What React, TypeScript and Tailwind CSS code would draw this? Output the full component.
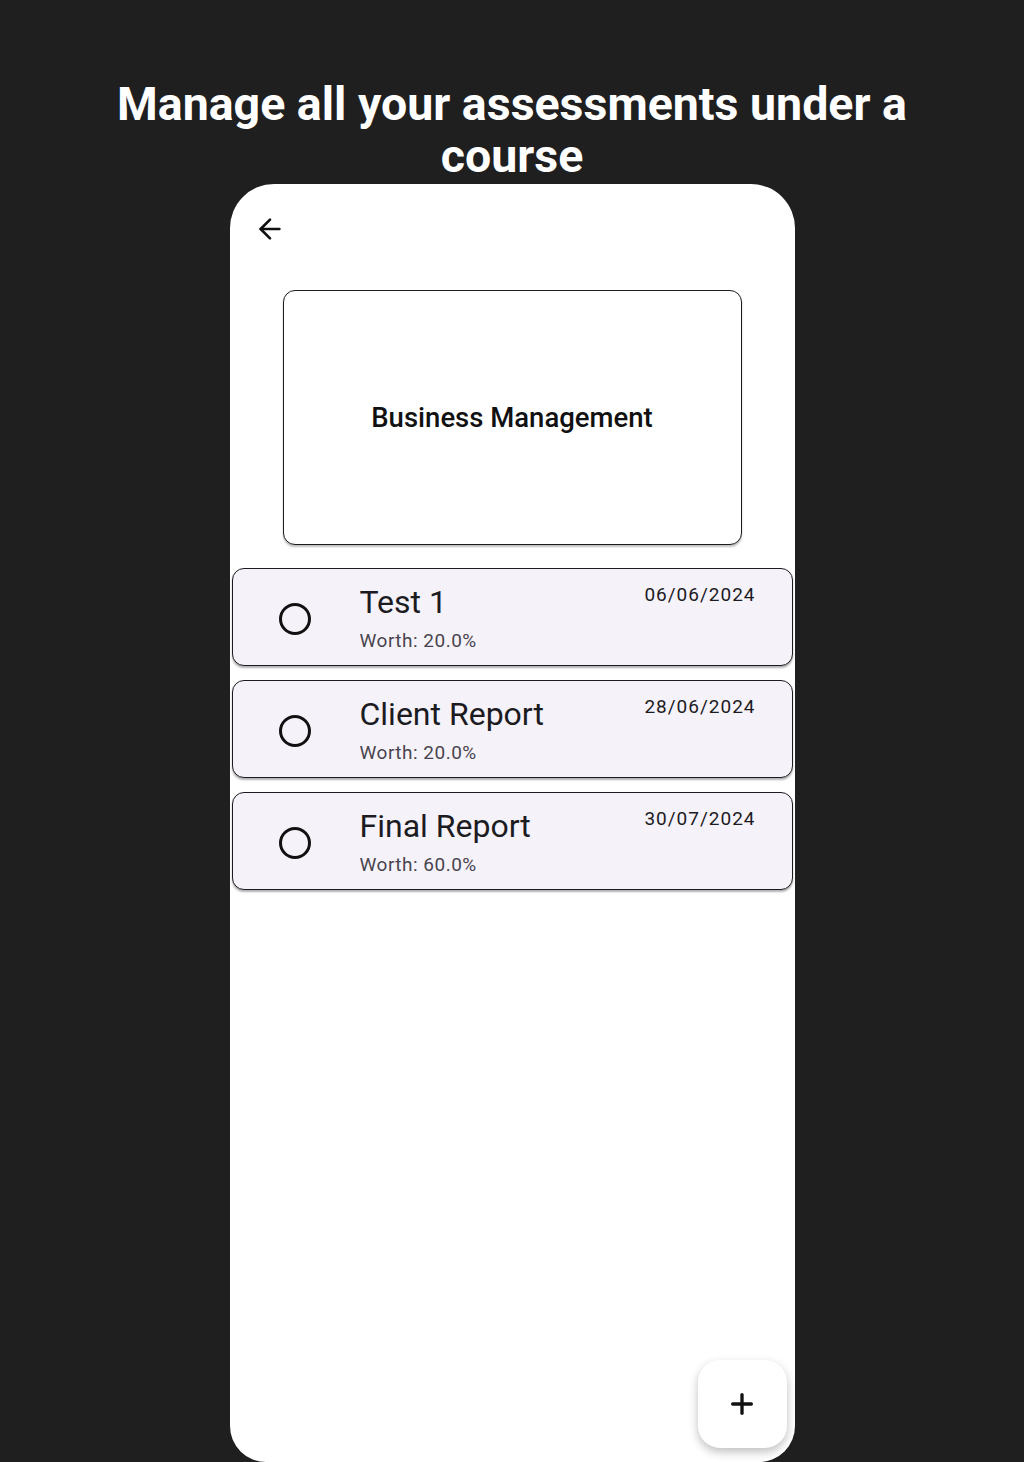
import { ArrowLeft, Plus } from "lucide-react";

const assessments = [
  { name: "Test 1", worth: "20.0%", due: "06/06/2024" },
  { name: "Client Report", worth: "20.0%", due: "28/06/2024" },
  { name: "Final Report", worth: "60.0%", due: "30/07/2024" },
];

const AssessmentRow = ({ name, worth, due }: { name: string; worth: string; due: string }) => (
  <div className="flex h-[98px] items-center rounded-[12px] border-[1.5px] border-[#1c1b1f] bg-[#f6f2f9] shadow-[0_2px_2px_rgba(0,0,0,0.3)]">
    <div className="ml-[46px] mt-[4px] h-[32px] w-[32px] rounded-full border-[3px] border-[#111]" />
    <div className="ml-[49px] mt-[2px] flex flex-col">
      <span className="text-[32px] leading-[36px] text-[#1c1b1f]">{name}</span>
      <span className="mt-[10px] text-[19px] leading-[22px] tracking-[0.5px] text-[#49454f]">
        Worth: {worth}
      </span>
    </div>
    <span className="mr-[36px] mt-[14px] ml-auto self-start text-[19px] leading-[24px] tracking-[1px] text-[#1c1b1f]">
      {due}
    </span>
  </div>
);

const App = () => {
  return (
    <div className="flex min-h-[1462px] flex-col items-center bg-[#1f1f1f] font-['Roboto',sans-serif]">
      <h1 className="pt-[78px] text-center text-[46.5px] font-bold leading-[52px] text-white">
        Manage all your assessments under a
        <br />
        course
      </h1>

      <div className="relative mt-[2px] flex h-[1278px] w-[565px] flex-col rounded-t-[44px] rounded-b-[36px] bg-white px-[2px]">
        <button className="ml-[22px] mt-[29px] self-start text-[#111]">
          <ArrowLeft className="h-[32px] w-[32px]" strokeWidth={2} />
        </button>

        <div className="mx-[51px] mt-[45px] flex h-[255px] items-center justify-center rounded-[12px] border-[1.5px] border-[#1c1b1f] bg-white shadow-[0_2px_2px_rgba(0,0,0,0.25)]">
          <span className="text-[27.5px] font-medium text-[#111]">Business Management</span>
        </div>

        <div className="mt-[23px] flex flex-col gap-[14px]">
          {assessments.map((a) => (
            <AssessmentRow key={a.name} {...a} />
          ))}
        </div>

        <button className="absolute bottom-[14px] right-[8px] flex h-[88px] w-[89px] items-center justify-center rounded-[22px] bg-white shadow-[0_4px_10px_rgba(0,0,0,0.25)]">
          <Plus className="h-[32px] w-[32px] text-[#111]" strokeWidth={2.5} />
        </button>
      </div>
    </div>
  );
};

export default App;
